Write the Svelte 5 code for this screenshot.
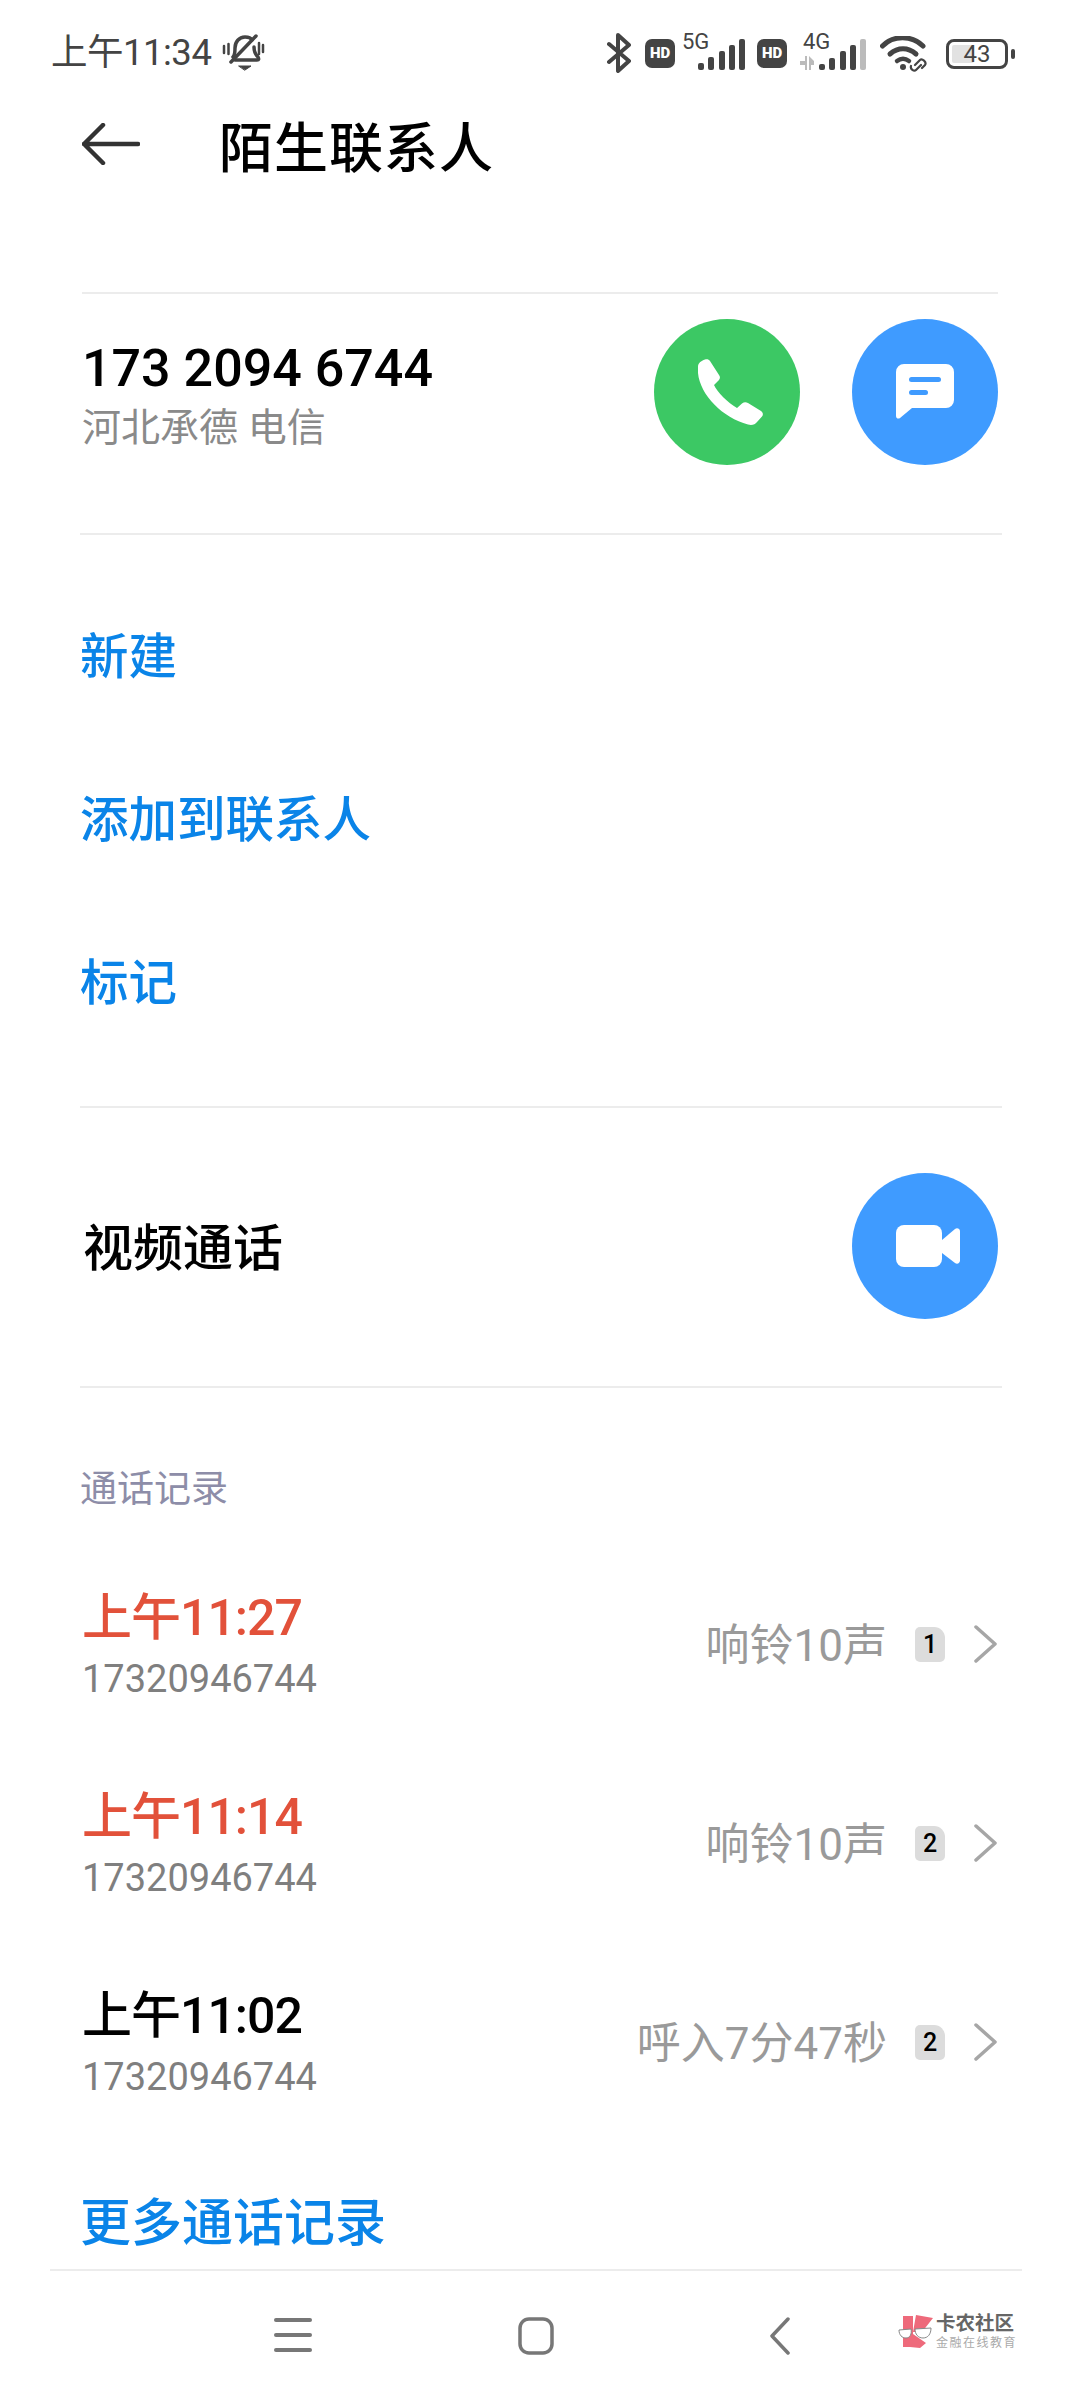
<script>
    const actions = ['新建', '添加到联系人', '标记'];
    const calls = [
        { time: '上午11:27', number: '17320946744', info: '响铃10声', sim: 1, missed: true },
        { time: '上午11:14', number: '17320946744', info: '响铃10声', sim: 2, missed: true },
        { time: '上午11:02', number: '17320946744', info: '呼入7分47秒', sim: 2, missed: false }
    ];
</script>

<div class="screen">
    <header class="status">
        <div class="status-left">
            <span class="clock">上午11:34</span>
            <svg class="bell" viewBox="0 0 44 40" width="44" height="40" fill="none" stroke="#444" stroke-width="3.500" stroke-linecap="round" stroke-linejoin="round">
                <path d="M2 13v7M6.500 11v10M41 12v7M37 10v11" stroke-width="2.500" />
                <path d="M11 24c2-2 2-5 2-9 0-6 4-11 10-11 3 0 6 1 7 3M32 14c0 4 1 7 4 10 1 2 1 3-1 3H13" />
                <path d="M9 29 34 3" />
                <path d="M17 33h12l-6 4z" fill="#444" stroke-width="1" />
            </svg>
        </div>
        <div class="status-right">
            <svg class="bt" viewBox="0 0 24 40" width="24" height="40" fill="none" stroke="#444" stroke-width="4" stroke-linecap="round" stroke-linejoin="round">
                <path d="M2 11 22 28 11 38V2l11 10L2 29" />
            </svg>
            <span class="hd">HD</span>
            <div class="signal">
                <span class="net">5G</span>
                <svg viewBox="0 0 47 31" width="47" height="31" fill="#444">
                    <rect x="0" y="24" width="6" height="7" rx="2" />
                    <rect x="10" y="18" width="6" height="13" rx="2" />
                    <rect x="21" y="12" width="6" height="19" rx="2" />
                    <rect x="31" y="6" width="6" height="25" rx="2" />
                    <rect x="41" y="0" width="6" height="31" rx="2" />
                </svg>
            </div>
            <span class="hd second">HD</span>
            <div class="signal four">
                <span class="net">4G</span>
                <svg viewBox="0 0 66 31" width="66" height="31" fill="#444">
                    <path d="M0 22h5v-5h2v14h-2v-5H0zM9 17l5 5v4h-3v5H9z" fill="#bbb" />
                    <rect x="19" y="25" width="6" height="6" rx="2" />
                    <rect x="29" y="19" width="6" height="12" rx="2" />
                    <rect x="40" y="12" width="6" height="19" rx="2" />
                    <rect x="50" y="6" width="6" height="25" rx="2" />
                    <rect x="60" y="0" width="6" height="31" rx="2" fill="#bbb" />
                </svg>
            </div>
            <svg class="wifi" viewBox="0 0 49 36" width="49" height="36" fill="none" stroke="#444" stroke-linecap="round">
                <path d="M2.500 10C13-1 32-1 43 10" stroke-width="5" />
                <path d="M10 18c8-7 18-7 26 0" stroke-width="5" />
                <path d="M17 25c4-3 8-3 12 0" stroke-width="4.500" />
                <circle cx="23" cy="31" r="3" fill="#444" stroke="none" />
                <path d="M35 29l5-5c2-2 7 2 5 5l-3 3M41 29l-5 5c-2 2-6-1-5-4" stroke-width="2.200" />
            </svg>
            <div class="battery">
                <div class="cell"><span class="charge"></span><span class="level">43</span></div>
                <span class="nub"></span>
            </div>
        </div>
    </header>

    <nav class="titlebar">
        <svg viewBox="0 0 58 42" width="58" height="42" fill="none" stroke="#333" stroke-width="4.500" stroke-linecap="round" stroke-linejoin="round">
            <path d="M2 21h54M21 2 2 21l19 19" />
        </svg>
        <h1>陌生联系人</h1>
    </nav>

    <section class="contact">
        <div class="contact-text">
            <div class="phone">173 2094 6744</div>
            <div class="place">河北承德 电信</div>
        </div>
        <div class="contact-buttons">
            <div class="round green">
                <svg class="handset" viewBox="0 0 66 66" width="66" height="66" fill="#fff">
                    <path d="M1 8C1 4 4 2 8 .5 10-.2 12 .5 13 2l9 14c1.500 2 1 4 0 5l-5 5c3 7 14 18 23 23l5-4.500c2-1.500 4-1.500 6-.5l13 8c2 1.500 2.500 3.500 1 5.500l-5 5.500c-2 2.500-5 3.500-9 2.500C26 59 3 36 1 14z" />
                </svg>
            </div>
            <div class="round blue">
                <svg viewBox="0 0 58 56" width="58" height="56">
                    <path fill="#fff" d="M8 0h42a8 8 0 0 1 8 8v28a8 8 0 0 1-8 8H16L4 54c-1.600 1.300-4 .4-4-2V8a8 8 0 0 1 8-8z" />
                    <rect x="13" y="13" width="32" height="5" rx="2.500" fill="#3f9bff" />
                    <rect x="13" y="26" width="19" height="5" rx="2.500" fill="#3f9bff" />
                </svg>
            </div>
        </div>
    </section>

    <section class="actions">
        {#each actions as action}
            <div class="action">{action}</div>
        {/each}
    </section>

    <section class="video">
        <span>视频通话</span>
        <div class="round blue">
            <svg class="camera" viewBox="0 0 64 42" width="64" height="42" fill="#fff">
                <path d="M8 0h30a8 8 0 0 1 8 8v26a8 8 0 0 1-8 8H8a8 8 0 0 1-8-8V8a8 8 0 0 1 8-8z" />
                <path d="M46 15 59 4c2-1.500 5-.5 5 2.500v29c0 3-3 4-5 2.500L46 28z" />
            </svg>
        </div>
    </section>

    <section class="log">
        <h2>通话记录</h2>
        {#each calls as call}
            <div class="call">
                <div class="call-text">
                    <div class="call-time" class:missed={call.missed}>{call.time}</div>
                    <div class="call-number">{call.number}</div>
                </div>
                <div class="call-info">
                    <span class="info">{call.info}</span>
                    <span class="sim">{call.sim}</span>
                    <svg viewBox="0 0 24 38" width="24" height="38" fill="none" stroke="#a6a6a6" stroke-width="3.500" stroke-linecap="round" stroke-linejoin="round">
                        <path d="M2 2 21 19 2 36" />
                    </svg>
                </div>
            </div>
        {/each}
        <div class="more">更多通话记录</div>
    </section>

    <footer class="navbar">
        <svg class="menu" viewBox="0 0 38 36" width="38" height="36" fill="#777">
            <rect y="0" width="38" height="4" rx="2" />
            <rect y="15" width="38" height="4" rx="2" />
            <rect y="30" width="38" height="4" rx="2" />
        </svg>
        <svg class="home" viewBox="0 0 36 38" width="36" height="38" fill="none" stroke="#777" stroke-width="3.500">
            <rect x="2" y="2" width="32" height="34" rx="9" />
        </svg>
        <svg class="back" viewBox="0 0 22 38" width="22" height="38" fill="none" stroke="#777" stroke-width="3.500" stroke-linecap="round" stroke-linejoin="round">
            <path d="M19 2 3 19l16 17" />
        </svg>
        <div class="mark">
            <svg viewBox="0 0 36 34" width="36" height="34">
                <path fill="#ee6a7b" d="M5 1h10v31H5zM18 0l17 3-11 14H15zM15 19l13 9-6 5-10-1z" />
                <path fill="#fff" stroke="#888" stroke-width="1" d="M1 15l12-1c1 5-1 9-5 9s-7-3-7-8zM17 14l16-1c0 6-3 10-8 10s-8-4-8-9z" />
            </svg>
            <div class="mark-text">
                <div class="mark-name">卡农社区</div>
                <div class="mark-sub">金融在线教育</div>
            </div>
        </div>
    </footer>
</div>

<style>
    :global(body) {
        margin: 0;
        background: #fff;
    }

    .screen {
        width: 1080px;
        height: 2400px;
        overflow: hidden;
        background: #fff;
        font-family: Roboto, "Noto Sans CJK SC", sans-serif;
        color: #000;
    }

    .status {
        height: 99px;
        box-sizing: border-box;
        padding: 32px 0 0 51px;
        display: flex;
        align-items: flex-start;
        justify-content: space-between;
        color: #444;
    }
    .status-left {
        display: flex;
        align-items: center;
        gap: 11px;
        height: 42px;
    }
    .clock {
        font-size: 36.500px;
        line-height: 42px;
        letter-spacing: -0.5px;
    }
    .status-right {
        display: flex;
        align-items: flex-start;
        padding-right: 65px;
    }
    .bt {
        margin: 1px 14px 0 0;
    }
    .hd {
        width: 30px;
        height: 29px;
        border-radius: 7px;
        background: #444;
        color: #fff;
        font-size: 15px;
        font-weight: 900;
        line-height: 29px;
        text-align: center;
        margin: 7px 7px 0 0;
    }
    .hd.second {
        margin: 7px 13px 0 12px;
    }
    .signal {
        position: relative;
        width: 63px;
        height: 38px;
    }
    .signal svg {
        position: absolute;
        right: 0;
        bottom: 0;
    }
    .signal.four {
        width: 66px;
    }
    .net {
        position: absolute;
        left: 0;
        top: -2px;
        font-size: 22px;
        line-height: 24px;
    }
    .four .net {
        left: 3px;
    }
    .wifi {
        margin: 4px 0 0 14px;
    }
    .battery {
        display: flex;
        align-items: center;
        margin: 7px 0 0 17px;
    }
    .cell {
        position: relative;
        width: 56px;
        height: 24px;
        border: 3px solid #444;
        border-radius: 8px;
        text-align: center;
    }
    .charge {
        position: absolute;
        left: 3px;
        top: 3px;
        bottom: 3px;
        width: 22px;
        background: #e2e2e2;
        border-radius: 2px;
    }
    .level {
        position: relative;
        display: block;
        font-size: 24px;
        line-height: 24px;
    }
    .nub {
        width: 4px;
        height: 10px;
        margin-left: 3px;
        border-radius: 2px;
        background: #444;
    }

    .titlebar {
        height: 90px;
        display: flex;
        align-items: center;
        padding-left: 82px;
    }
    .titlebar h1 {
        margin: 0 0 0 79px;
        font-size: 54px;
        font-weight: 500;
        letter-spacing: 1px;
    }

    .contact {
        margin: 103px 82px 0;
        height: 241px;
        box-sizing: border-box;
        border-top: 2px solid #ececec;
        display: flex;
        align-items: center;
        justify-content: space-between;
        padding-bottom: 44px;
    }
    .contact-text {
        margin-top: 8px;
    }
    .phone {
        font-size: 52px;
        line-height: 64px;
        font-weight: 500;
    }
    .place {
        font-size: 39px;
        line-height: 54px;
        color: #8a8a8a;
    }
    .contact-buttons {
        display: flex;
        gap: 52px;
    }
    .round {
        width: 146px;
        height: 146px;
        border-radius: 50%;
        display: flex;
        align-items: center;
        justify-content: center;
    }
    .green {
        background: #3cc864;
    }
    .blue {
        background: #3f9bff;
    }
    .handset,
    .camera {
        margin-left: 6px;
    }

    .actions {
        margin: 0 78px 0 80px;
        padding: 36px 0 46px;
        border-top: 2px solid #ececec;
    }
    .action {
        height: 163px;
        display: flex;
        align-items: center;
        font-size: 48.500px;
        font-weight: 500;
        color: #0a84e8;
    }

    .video {
        margin: 0 78px 0 80px;
        height: 282px;
        box-sizing: border-box;
        border-top: 2px solid #ececec;
        border-bottom: 2px solid #ececec;
        display: flex;
        align-items: center;
        justify-content: space-between;
        padding: 0 4px 3px 3px;
        font-size: 50px;
        font-weight: 500;
    }
    .video span {
        margin-bottom: 3px;
    }

    .log {
        padding: 0 0 0 80px;
    }
    .log h2 {
        margin: 0;
        height: 158px;
        box-sizing: border-box;
        display: flex;
        align-items: center;
        padding-top: 38px;
        padding-bottom: 0;
        margin-bottom: 0;
        font-size: 37px;
        font-weight: 400;
        color: #8d8da8;
    }
    .call {
        height: 199px;
        display: flex;
        align-items: center;
        justify-content: space-between;
        margin-right: 82px;
    }
    .call-text {
        padding-left: 2px;
    }
    .call-time {
        font-size: 50px;
        line-height: 64px;
        font-weight: 500;
        letter-spacing: -1px;
        margin-bottom: 3px;
    }
    .call-time.missed {
        color: #e2513a;
    }
    .call-number {
        font-size: 38px;
        line-height: 52px;
        color: #7f7f7f;
    }
    .call-info {
        display: flex;
        align-items: center;
        margin-bottom: 4px;
    }
    .info {
        font-size: 44px;
        color: #9a9a9a;
        margin-bottom: 4px;
    }
    .sim {
        width: 30px;
        height: 35px;
        margin: 2px 29px 0 28px;
        background: #dcdcdc;
        border-radius: 5px 11px 5px 5px;
        font-size: 25px;
        font-weight: 500;
        line-height: 35px;
        text-align: center;
    }
    .more {
        height: 100px;
        padding-top: 26px;
        display: flex;
        align-items: center;
        font-size: 51px;
        font-weight: 500;
        color: #0a84e8;
    }

    .navbar {
        position: relative;
        margin: 0 58px 0 50px;
        height: 130px;
        border-top: 2px solid #ececec;
        display: flex;
        align-items: center;
        padding-left: 224px;
    }
    .home {
        margin-left: 206px;
    }
    .back {
        margin-left: 215px;
    }
    .mark {
        position: absolute;
        right: 5px;
        top: 42px;
        display: flex;
        align-items: center;
        gap: 2px;
    }
    .mark-name {
        font-size: 19.500px;
        line-height: 22px;
        font-weight: 700;
        color: #666;
    }
    .mark-sub {
        font-size: 12px;
        line-height: 16px;
        letter-spacing: 1.500px;
        color: #aaa;
    }
</style>
